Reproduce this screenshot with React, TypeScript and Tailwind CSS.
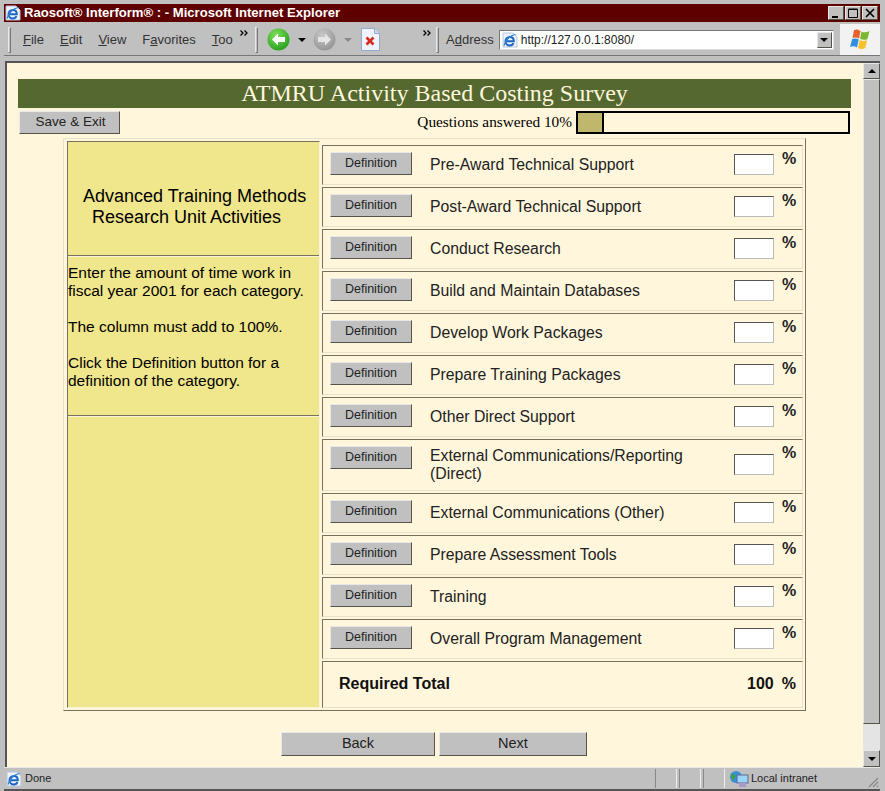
import React from "react";

const rows = [
  "Pre-Award Technical Support",
  "Post-Award Technical Support",
  "Conduct Research",
  "Build and Maintain Databases",
  "Develop Work Packages",
  "Prepare Training Packages",
  "Other Direct Support",
  "External Communications/Reporting (Direct)",
  "External Communications (Other)",
  "Prepare Assessment Tools",
  "Training",
  "Overall Program Management",
];

const raised = "border border-t-[#e8e8e8] border-l-[#e8e8e8] border-r-[#55534a] border-b-[#55534a] bg-[#c0c0c0]";

const IeIcon = ({ size = 16 }: { size?: number }) => (
  <svg width={size} height={size} viewBox="0 0 16 16">
    <path d="M1 1h10l4 4v10H1z" fill="#eef2fa" stroke="#b8c6dc" />
    <path d="M3.500 9.200h8.300c0-2.600-1.700-4.300-4-4.300-2.500 0-4.300 1.900-4.300 4.300s1.800 4.300 4.300 4.300c1.800 0 3.100-.9 3.700-2.300" fill="none" stroke="#1c66c0" strokeWidth="2" />
    <path d="M2 13.500C4 7 9 3 13.500 2.500" fill="none" stroke="#2a82d8" strokeWidth="1.200" />
  </svg>
);

const Grip = () => <div className="w-[3px] h-[26px] border border-t-[#e8e8e8] border-l-[#e8e8e8] border-r-[#777] border-b-[#777]" />;

const Chevrons = ({ className }: { className: string }) => (
  <svg className={`self-start mt-[6px] ${className}`} width="8" height="6" viewBox="0 0 8 6">
    <path d="M0.500 0.500L3 3 .5 5.500M4.500 0.500L7 3 4.500 5.500" fill="none" stroke="#000" strokeWidth="1.300" />
  </svg>
);

const NavArrow = ({ id, light, dark, dir }: { id: string; light: string; dark: string; dir: "l" | "r" }) => (
  <svg width="23" height="23" viewBox="0 0 23 23">
    <defs>
      <radialGradient id={id} cx="0.4" cy="0.3" r="0.8">
        <stop offset="0" stopColor={light} />
        <stop offset="1" stopColor={dark} />
      </radialGradient>
    </defs>
    <circle cx="11.500" cy="11.500" r="11" fill={`url(#${id})`} />
    <path
      d={dir === "l" ? "M11 5.500l-6 6 6 6v-3.500h7V9h-7z" : "M12 5.500l6 6-6 6v-3.500H5V9h7z"}
      fill={dir === "l" ? "#fff" : "#e6e6e6"}
    />
  </svg>
);

const StopPage = () => (
  <svg width="19" height="23" viewBox="0 0 19 23">
    <path d="M.5.500h13l5 5v17H.5z" fill="#eef3fc" stroke="#93a9cf" />
    <path d="M13.500.500v5h5" fill="#cfdcf2" stroke="#93a9cf" />
    <path d="M5.500 9.500l7 7M12.500 9.500l-7 7" stroke="#d9281c" strokeWidth="2.600" />
  </svg>
);

const WinFlag = () => (
  <svg width="24" height="24" viewBox="0 0 24 24">
    <path d="M6 2c2.500-1 4.500-.5 6.500 1L11 10.500c-2-1.200-4-1.500-6.500-.5z" fill="#e8632b" />
    <path d="M13.500 3.500c2.200 1.200 5 1.200 8-.5l-2 8c-2.500 1.300-5 1-7.500-.2z" fill="#7cb82f" />
    <path d="M4.200 11c2.500-1 4.500-.7 6.500.5L9 19.500c-2.200-1.300-4.500-1.500-7-.5z" fill="#2f8fe0" />
    <path d="M11.700 12c2.500 1.300 5 1.500 7.500.3l-2 7.700c-2.500 1.500-5 1.200-7.200 0z" fill="#f5c22a" />
  </svg>
);

const App = () => {
  return (
    <div className="w-[885px] h-[791px] overflow-hidden flex flex-col bg-[#c0c0c0] font-['Liberation_Sans',Arial,sans-serif] text-black">
      {/* title bar */}
      <div className="mt-[4px] ml-[4px] mr-[5px] h-[18px] shrink-0 bg-[#5f0000] flex items-center pl-[1px] pr-[2px]">
        <IeIcon size={16} />
        <span className="ml-[3px] text-white font-bold text-[13.100px] leading-none">
          Raosoft® Interform® : - Microsoft Internet Explorer
        </span>
        <div className="ml-auto flex gap-[1px]">
          {["min", "max", "close"].map((c) => (
            <div key={c} className={`w-[16px] h-[14px] ${raised}`}>
              <svg width="14" height="12" viewBox="0 0 14 12">
                {c === "min" && <path d="M3 10h6" stroke="#000" strokeWidth="2" />}
                {c === "max" && <path d="M2.500 2.500h9v8h-9zM2.500 2h9" fill="none" stroke="#000" />}
                {c === "close" && <path d="M3 2l8 8M11 2l-8 8" stroke="#000" strokeWidth="1.600" />}
              </svg>
            </div>
          ))}
        </div>
      </div>

      {/* toolbar */}
      <div className="ml-[4px] mr-[5px] mt-[2px] h-[32px] shrink-0 flex items-center text-[13px] text-[#333] border-b border-[#777]">
        <div className="ml-[4px]"><Grip /></div>
        <div className="ml-[12px] flex gap-[16px] w-[217px]">
          <span><u>F</u>ile</span>
          <span><u>E</u>dit</span>
          <span><u>V</u>iew</span>
          <span>F<u>a</u>vorites</span>
          <span><u>T</u>oo</span>
        </div>
        <Chevrons className="" />
        <div className="ml-[7px]"><Grip /></div>
        <div className="ml-[9px] flex items-center">
          <NavArrow id="back" light="#7ee05c" dark="#1f9a18" dir="l" />
          <span className="ml-[8px] w-0 h-0 border-x-[4px] border-x-transparent border-t-[4px] border-t-black" />
          <div className="ml-[7px]"><NavArrow id="fwd" light="#c8c8c8" dark="#8f8f8f" dir="r" /></div>
          <span className="ml-[8px] w-0 h-0 border-x-[4px] border-x-transparent border-t-[4px] border-t-[#888]" />
          <div className="ml-[9px] flex"><StopPage /></div>
        </div>
        <Chevrons className="ml-[43px]" />
        <div className="ml-[5px]"><Grip /></div>
        <span className="ml-[7px]">A<u>d</u>dress</span>
        <div className="ml-[5px] w-[335px] h-[20px] bg-white border border-t-[#777] border-l-[#777] border-r-[#ddd] border-b-[#ddd] flex items-center">
          <div className="ml-[2px] flex"><IeIcon size={16} /></div>
          <span className="ml-[3px] text-[12px] text-[#222]">http://127.0.0.1:8080/</span>
          <div className={`ml-auto mr-[1px] w-[15px] h-[16px] flex items-center justify-center ${raised}`}>
            <span className="w-0 h-0 border-x-[4px] border-x-transparent border-t-[4px] border-t-black" />
          </div>
        </div>
        <div className="ml-auto w-[40px] h-full bg-[#f2f2f2] flex items-center justify-center"><WinFlag /></div>
      </div>

      {/* page + scrollbar */}
      <div className="mt-[5px] ml-[5px] mr-[5px] h-[706px] shrink-0 flex border-t-2 border-l-2 border-t-[#555] border-l-[#555] bg-[#fff6dc]">
        <div className="flex-1 min-w-0 pt-[16px] pl-[11px] pr-[12px] flex flex-col">
          <div className="h-[29px] bg-[#54682f] text-center text-[#fff6dc] font-['Liberation_Serif',serif] text-[24px] leading-[29px]">
            ATMRU Activity Based Costing Survey
          </div>
          <div className="mt-[3px] h-[23px] flex items-center pl-[1px] pr-[1px]">
            <div className={`w-[101px] h-[23px] flex items-center justify-center text-[13.500px] text-[#222] pl-[2px] ${raised}`}>Save &amp; Exit</div>
            <span className="ml-auto mr-[4px] font-['Liberation_Serif',serif] text-[15.300px]">Questions answered 10%</span>
            <div className="w-[274px] h-[23px] border-2 border-black flex">
              <div className="w-[26px] bg-[#bfb76b] border-r-2 border-black" />
            </div>
          </div>

          {/* survey table */}
          <div className="mt-[4px] ml-[45px] w-[743px] h-[573px] p-[2px] pl-[3px] pr-[2px] flex gap-[2px] border border-[#e8e0c8] border-r-[#77705c] border-b-[#77705c]">
            <div className="w-[253px] bg-[#f0e68c] border border-t-[#77705c] border-l-[#77705c] border-r-[#f8f2d8] border-b-[#f8f2d8] flex flex-col">
              <div className="h-[114px] border-b border-[#77705c] shadow-[0_1px_0_#f8f2d8] flex flex-col justify-center text-[18px] leading-[21px] pl-[15px] pt-[16px]">
                <span>Advanced Training Methods</span>
                <span className="pl-[9px]">Research Unit Activities</span>
              </div>
              <div className="h-[160px] border-b border-[#77705c] shadow-[0_1px_0_#f8f2d8] pt-[8px] text-[15.500px] leading-[18px] pr-[8px]">
                <p>Enter the amount of time work in fiscal year 2001 for each category.</p>
                <p className="mt-[18px]">The column must add to 100%.</p>
                <p className="mt-[18px]">Click the Definition button for a definition of the category.</p>
              </div>
            </div>
            <div className="flex-1 min-w-0 flex flex-col pt-[4px] gap-[2px]">
              {rows.map((r, i) => (
                <div
                  key={r}
                  className={`${i === 7 ? "h-[52px]" : "h-[40px]"} flex items-center border border-[#e8e0c8] border-t-[#77705c] border-l-[#77705c] pl-[7px]`}
                >
                  <div className={`self-start mt-[6px] w-[82px] h-[23px] flex items-center justify-center text-[12.500px] text-[#222] shrink-0 ${raised}`}>Definition</div>
                  <div className="ml-[18px] w-[272px] text-[15.800px] leading-[18px] text-[#222]">{r}</div>
                  <div className="ml-[32px] mb-[2px] w-[40px] h-[21px] bg-white border border-t-[#555] border-l-[#555] border-r-[#bbb] border-b-[#bbb]" />
                  <span className="self-start mt-[4px] ml-[8px] text-[16px] leading-[18px] font-bold text-[#222]">%</span>
                </div>
              ))}
              <div className="flex-1 flex items-center border border-[#e8e0c8] border-t-[#77705c] border-l-[#77705c] pb-[2px] font-bold text-[16px] text-[#111]">
                <span className="ml-[16px]">Required Total</span>
                <span className="ml-auto">100</span>
                <span className="ml-[8px] mr-[6px]">%</span>
              </div>
            </div>
          </div>

          <div className="mt-[21px] ml-[263px] flex gap-[4px]">
            <div className={`w-[154px] h-[24px] flex items-center justify-center text-[14.500px] text-[#222] ${raised}`}>Back</div>
            <div className={`w-[148px] h-[24px] flex items-center justify-center text-[14.500px] text-[#222] ${raised}`}>Next</div>
          </div>
        </div>

        {/* scrollbar */}
        <div className="w-[17px] shrink-0 bg-[#e4e4e4] flex flex-col">
          <div className={`h-[16px] flex items-center justify-center ${raised}`}>
            <span className="w-0 h-0 border-x-[4px] border-x-transparent border-b-[4px] border-b-black" />
          </div>
          <div className={`h-[645px] ${raised}`} />
          <div className={`mt-auto h-[17px] flex items-center justify-center ${raised}`}>
            <span className="w-0 h-0 border-x-[4px] border-x-transparent border-t-[4px] border-t-black" />
          </div>
        </div>
      </div>

      {/* status bar */}
      <div className="flex-1 ml-[4px] mr-[5px] flex items-center text-[11px] text-[#222] border-t border-t-[#e8e8e8] border-b-2 border-b-[#555]">
        <div className="ml-[2px] flex"><IeIcon size={16} /></div>
        <span className="ml-[3px]">Done</span>
        <div className="ml-auto flex h-[19px] items-center">
          {[0, 1, 2].map((i) => (
            <div key={i} className="w-[22px] h-full mr-[2px] border-l border-[#888] border-r border-r-[#eee]" />
          ))}
          <svg className="ml-[2px]" width="20" height="18" viewBox="0 0 20 18">
            <circle cx="7" cy="7" r="6" fill="#3a8fd8" />
            <path d="M2 3l5 3-4 5z" fill="#3aa63a" />
            <rect x="8" y="5" width="11" height="8" fill="#9cd4f4" stroke="#5a6a9a" />
            <rect x="10" y="13" width="7" height="4" fill="#a79ac8" />
          </svg>
          <span className="ml-[2px] w-[68px] whitespace-nowrap">Local intranet</span>
          <div className="w-[61px] relative h-full">
            <svg className="absolute right-[1px] bottom-0" width="12" height="12" viewBox="0 0 12 12">
              <path d="M11 2L2 11M11 6l-5 5M11 10l-1 1" stroke="#888" strokeWidth="1.200" />
            </svg>
          </div>
        </div>
      </div>
    </div>
  );
};

export default App;
